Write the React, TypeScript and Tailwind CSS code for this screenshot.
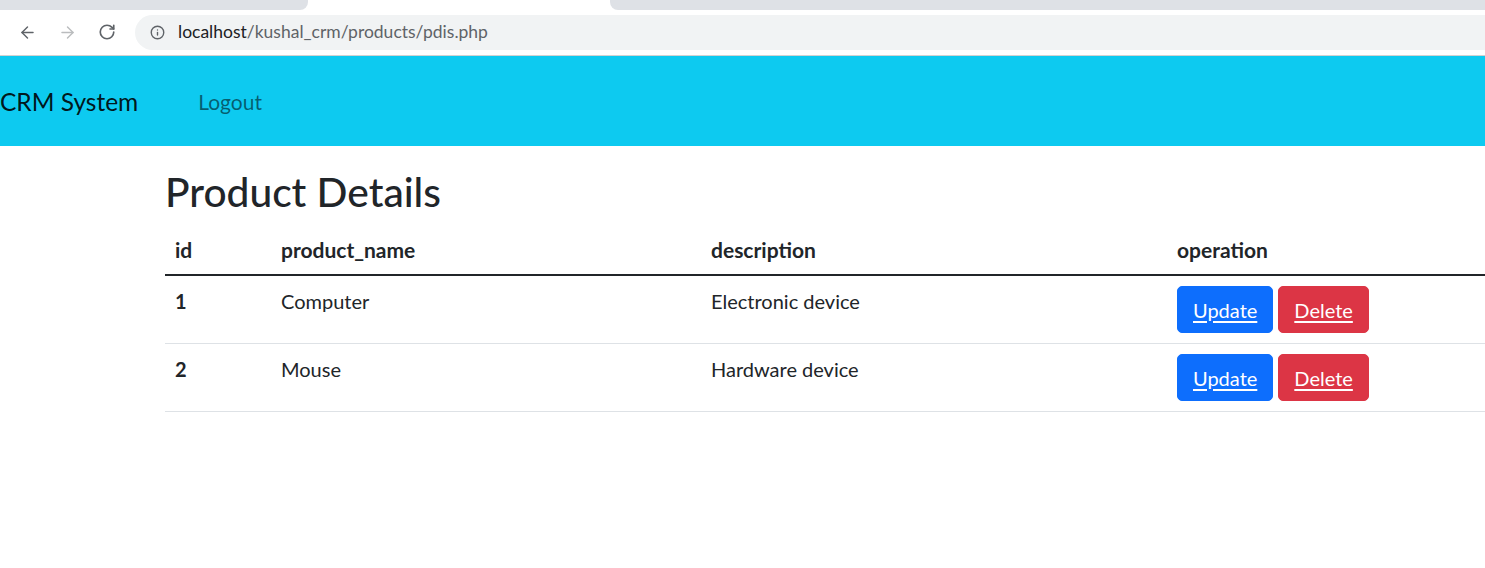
import React from 'react';
import { ArrowLeft, ArrowRight, RotateCw, Info } from 'lucide-react';

const products = [
  { id: 1, name: 'Computer', description: 'Electronic device' },
  { id: 2, name: 'Mouse', description: 'Hardware device' },
];

function BrowserBar() {
  return (
    <div className="bg-white">
      {/* tab strip */}
      <div className="flex h-[10px]">
        <div className="w-[308px] bg-[#dee1e6] rounded-br-[8px]" />
        <div className="w-[302px] bg-white" />
        <div className="flex-1 bg-[#dee1e6] rounded-bl-[8px]" />
      </div>
      {/* toolbar */}
      <div className="flex h-[46px] items-center border-b border-[#d2d2d2] pb-px">
        <div className="flex w-[135px] shrink-0 items-center">
          <ArrowLeft className="ml-[18px] h-[19px] w-[19px] text-[#5f6368]" strokeWidth={1.8} />
          <ArrowRight className="ml-[21px] h-[19px] w-[19px] text-[#babcbe]" strokeWidth={1.8} />
          <RotateCw className="ml-[21px] h-[18px] w-[18px] text-[#5f6368]" strokeWidth={2.2} />
        </div>
        <div className="flex h-[35px] flex-1 items-center rounded-l-full bg-[#f1f3f4] pl-[15px]">
          <Info className="h-[15px] w-[15px] text-[#5f6368]" strokeWidth={2.2} />
          <span className="ml-[13px] text-[17.5px] font-['Lato',sans-serif] text-[#202124]">
            localhost<span className="text-[#5f6368]">/kushal_crm/products/pdis.php</span>
          </span>
        </div>
      </div>
    </div>
  );
}

export default function App() {
  return (
    <div className="h-[568px] w-full overflow-hidden bg-white font-['Lato',sans-serif] text-[#212529]">
      <BrowserBar />

      <nav className="flex h-[90px] items-center bg-[#0dcaf0] pt-[2px]">
        <span className="text-[24.5px] leading-[30px] text-black/90">CRM System</span>
        <a href="#" className="ml-[60px] text-[21px] leading-[30px] text-black/55">
          Logout
        </a>
      </nav>

      <div className="pl-[165px]">
        <h1 className="mt-[22px] mb-[9px] text-[40.7px] font-medium leading-[48px]">Product Details</h1>

        <table className="w-[1320px] table-fixed border-collapse text-left text-[20px] leading-[30px]">
          <colgroup>
            <col className="w-[106px]" />
            <col className="w-[430px]" />
            <col className="w-[466px]" />
            <col />
          </colgroup>
          <thead className="text-[21px]">
            <tr className="border-b-2 border-[#212529]">
              <th className="px-[10px] pt-[10px] pb-[9px] align-bottom font-bold">id</th>
              <th className="px-[10px] pt-[10px] pb-[9px] align-bottom font-bold">product_name</th>
              <th className="px-[10px] pt-[10px] pb-[9px] align-bottom font-bold">description</th>
              <th className="px-[10px] pt-[10px] pb-[9px] align-bottom font-bold">operation</th>
            </tr>
          </thead>
          <tbody>
            {products.map((p) => (
              <tr key={p.id} className="border-b border-[#dee2e6]">
                <th className="px-[10px] py-[10px] align-top font-bold">{p.id}</th>
                <td className="px-[10px] py-[10px] align-top">{p.name}</td>
                <td className="px-[10px] py-[10px] align-top">{p.description}</td>
                <td className="px-[10px] py-[10px] align-top">
                  <div className="flex gap-[5px]">
                    <a
                      href="#"
                      className="rounded-[5px] border border-[#0d6efd] bg-[#0d6efd] px-[15px] py-[7.5px] text-white underline underline-offset-[3px]"
                    >
                      Update
                    </a>
                    <a
                      href="#"
                      className="rounded-[5px] border border-[#dc3545] bg-[#dc3545] px-[15px] py-[7.5px] text-white underline underline-offset-[3px]"
                    >
                      Delete
                    </a>
                  </div>
                </td>
              </tr>
            ))}
          </tbody>
        </table>
      </div>
    </div>
  );
}
